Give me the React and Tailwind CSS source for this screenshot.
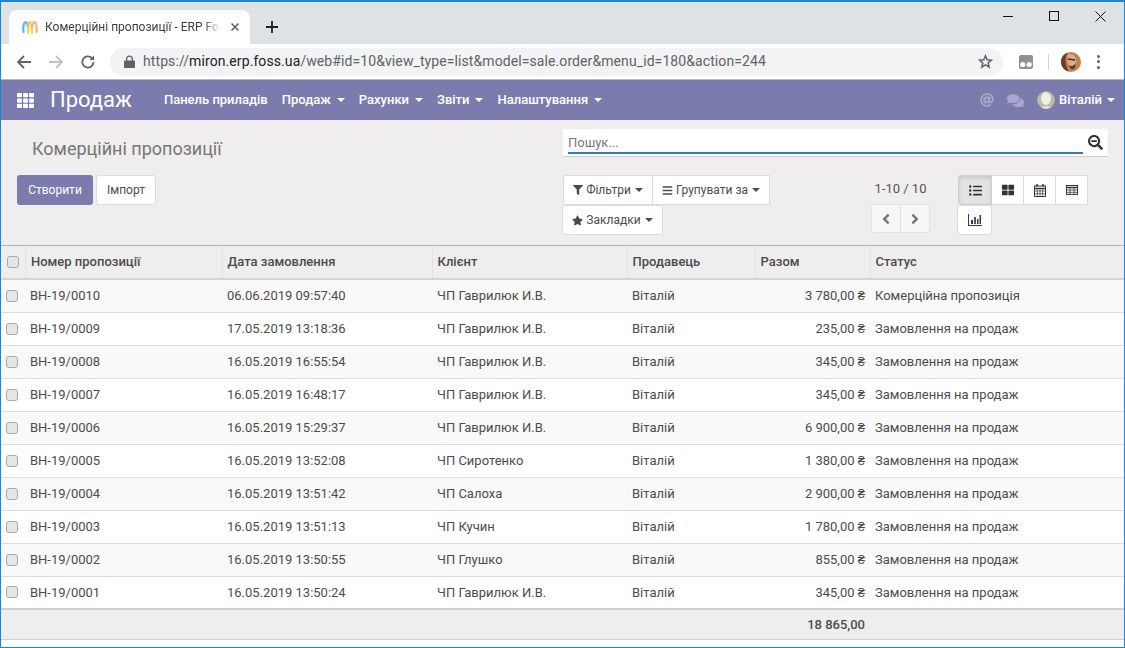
import { FaFilter, FaBars, FaStar, FaListUl, FaThLarge, FaSearchMinus, FaAngleLeft, FaAngleRight, FaAt, FaComments, FaTh } from "react-icons/fa";

const rows = [
  ["ВН-19/0010", "06.06.2019 09:57:40", "ЧП Гаврилюк И.В.", "3 780,00 ₴", "Комерційна пропозиція"],
  ["ВН-19/0009", "17.05.2019 13:18:36", "ЧП Гаврилюк И.В.", "235,00 ₴", "Замовлення на продаж"],
  ["ВН-19/0008", "16.05.2019 16:55:54", "ЧП Гаврилюк И.В.", "345,00 ₴", "Замовлення на продаж"],
  ["ВН-19/0007", "16.05.2019 16:48:17", "ЧП Гаврилюк И.В.", "345,00 ₴", "Замовлення на продаж"],
  ["ВН-19/0006", "16.05.2019 15:29:37", "ЧП Гаврилюк И.В.", "6 900,00 ₴", "Замовлення на продаж"],
  ["ВН-19/0005", "16.05.2019 13:52:08", "ЧП Сиротенко", "1 380,00 ₴", "Замовлення на продаж"],
  ["ВН-19/0004", "16.05.2019 13:51:42", "ЧП Салоха", "2 900,00 ₴", "Замовлення на продаж"],
  ["ВН-19/0003", "16.05.2019 13:51:13", "ЧП Кучин", "1 780,00 ₴", "Замовлення на продаж"],
  ["ВН-19/0002", "16.05.2019 13:50:55", "ЧП Глушко", "855,00 ₴", "Замовлення на продаж"],
  ["ВН-19/0001", "16.05.2019 13:50:24", "ЧП Гаврилюк И.В.", "345,00 ₴", "Замовлення на продаж"],
];

const menu = [
  ["Панель приладів", false],
  ["Продаж", true],
  ["Рахунки", true],
  ["Звіти", true],
  ["Налаштування", true],
];

const Caret = ({ className = "" }) => (
  <span className={`inline-block w-0 h-0 border-x-[4px] border-x-transparent border-t-[4px] border-t-current ${className}`} />
);

const Check = () => (
  <span className="block w-[12px] h-[12px] rounded-[3px] border border-[#a8a8a8] bg-[#e6e6e6]" />
);

function Favicon() {
  return (
    <svg width="18" height="18" viewBox="0 0 18 18" fill="none" strokeWidth="2.2" strokeLinecap="round">
      <path d="M2.500 14 C2 9 2.500 5 4.500 4 C6 4 6.500 6 6.800 9" stroke="#58b7ee" />
      <path d="M7 15 C7 10 7.500 5 9 4 C10.500 5 11 10 11 15" stroke="#f8d04a" />
      <path d="M11.200 9 C11.500 6 12 4 13.500 4 C15.500 5 16 9 15.500 14" stroke="#f0b27a" />
    </svg>
  );
}

function ChromeAvatar() {
  return (
    <svg width="20" height="20" viewBox="0 0 20 20">
      <circle cx="10" cy="10" r="10" fill="#c4814f" />
      <path d="M0 10 A10 10 0 0 1 7 .5 C4.500 4 4 8 5 12 C5.500 15 7 18 8 19.800 A10 10 0 0 1 0 10" fill="#6f3a24" />
      <path d="M7 2.500 C12 1 15.500 5 15 10 C14.500 14 12.500 17 10 17 C7.500 15 5.500 7 7 2.500" fill="#dcae90" />
      <path d="M7 7 L14 8" stroke="#4a2a20" strokeWidth="1.300" />
      <path d="M8 13 C10 15 13 14 14.500 11 L14 15.500 C12 18.500 9 18 8 13" fill="#5a3f33" />
    </svg>
  );
}

function UserAvatar() {
  return (
    <svg width="18" height="18" viewBox="0 0 18 18" className="rounded-full">
      <circle cx="9" cy="9" r="9" fill="#b9bca6" />
      <ellipse cx="9" cy="7.500" rx="5" ry="6.500" fill="#eceee8" />
      <path d="M3 18 C4 14 14 14 15 18 Z" fill="#dfe1d8" />
    </svg>
  );
}

// FontAwesome 4 look: these three are thin grids in the reference, not the filled FA5 glyphs
function CalendarIcon() {
  return (
    <svg width="12" height="13" viewBox="0 0 12 13" fill="none" stroke="#3a3a3a">
      <rect x=".5" y="2" width="11" height="10.500" />
      <path d="M.5 4.500 H11.500" strokeWidth="1.500" />
      <path d="M.5 7 H11.500 M.5 9.700 H11.500 M3.300 4.500 V12.500 M6 4.500 V12.500 M8.700 4.500 V12.500" strokeWidth=".7" />
      <path d="M3 0 V2.500 M9 0 V2.500" strokeWidth="1.600" />
    </svg>
  );
}

function TableIcon() {
  return (
    <svg width="12" height="10" viewBox="0 0 12 10" fill="none" stroke="#3a3a3a">
      <rect x=".5" y=".5" width="11" height="9" />
      <path d="M.5 2.500 H11.500" strokeWidth="1.500" />
      <path d="M.5 5 H11.500 M.5 7.300 H11.500 M4 2.500 V9.500 M8 2.500 V9.500" strokeWidth=".8" />
    </svg>
  );
}

function ChartIcon() {
  return (
    <svg width="14" height="12" viewBox="0 0 14 12" fill="#3a3a3a">
      <path d="M0 0 H1 V11 H14 V12 H0 Z" />
      <rect x="3" y="6" width="2" height="4" />
      <rect x="6" y="3" width="2" height="7" fill="#2f5f8f" />
      <rect x="9" y="5" width="1.500" height="5" />
      <rect x="11.500" y="1" width="1.500" height="9" />
    </svg>
  );
}

function Browser() {
  return (
    <>
      {/* Tab strip */}
      <div className="h-[42px] bg-[#dee1e6] flex items-end pl-[8px] relative">
        <div className="h-[34px] w-[241px] bg-white rounded-t-[8px] flex items-center pl-[12px] pr-[10px] text-[#3c4043] text-[12px]">
          <Favicon />
          <span className="ml-[6px] w-[176px] overflow-hidden whitespace-nowrap [mask-image:linear-gradient(to_right,black_90%,transparent)]">Комерційні пропозиції - ERP Foss</span>
          <svg width="10" height="10" viewBox="0 0 10 10" className="ml-auto" stroke="#5f6368" strokeWidth="1.6"><path d="M1.500 1.500 L8.500 8.500 M8.500 1.500 L1.500 8.500" /></svg>
        </div>
        <svg width="14" height="14" viewBox="0 0 14 14" className="ml-[15px] mb-[10px]" stroke="#202124" strokeWidth="1.8"><path d="M7 1 V13 M1 7 H13" /></svg>
        <div className="flex ml-auto items-start self-start mt-[7px] mr-[18px]">
          <svg width="10" height="10" viewBox="0 0 10 10" className="mt-[2px] mr-[36px]" stroke="#111" strokeWidth="1"><path d="M0 5.500 H10" /></svg>
          <svg width="10" height="10" viewBox="0 0 10 10" className="mt-[2px] mr-[36px]" stroke="#111" strokeWidth="1" fill="none"><rect x=".5" y=".5" width="9" height="9" /></svg>
          <svg width="11" height="11" viewBox="0 0 11 11" className="mt-[2px]" stroke="#111" strokeWidth="1"><path d="M.5 .5 L10.500 10.500 M10.500 .5 L.5 10.500" /></svg>
        </div>
      </div>
      {/* Address bar */}
      <div className="h-[36px] bg-white border-b border-[#b8b8b8] flex items-center pl-[15px] pr-[17px]">
        <svg width="16" height="16" viewBox="0 0 16 16" fill="none" stroke="#5f6368" strokeWidth="1.8"><path d="M15 8 H2 M8 2 L2 8 L8 14" /></svg>
        <svg width="16" height="16" viewBox="0 0 16 16" fill="none" stroke="#bdc1c6" strokeWidth="1.8" className="ml-[16px]"><path d="M1 8 H14 M8 2 L14 8 L8 14" /></svg>
        <svg width="16" height="16" viewBox="0 0 16 16" fill="none" stroke="#5f6368" strokeWidth="1.8" className="ml-[16px]"><path d="M13.500 8 A5.600 5.600 0 1 1 11.800 4" /><path d="M14 1.500 V6 H9.500 Z" fill="#5f6368" stroke="none" /></svg>
        <div className="ml-[14px] w-[893px] h-[28px] rounded-full bg-[#f1f3f4] flex items-center pl-[14px] pr-[10px]">
          <svg width="11" height="13" viewBox="0 0 11 13" fill="#5f6368"><path d="M2 5.500 V4 a3.500 3.500 0 0 1 7 0 V5.500 H10 a1 1 0 0 1 1 1 V12 a1 1 0 0 1 -1 1 H1 a1 1 0 0 1 -1 -1 V6.500 a1 1 0 0 1 1 -1 Z M3.300 5.500 H7.700 V4 a2.200 2.200 0 0 0 -4.400 0 Z" /></svg>
          <span className="ml-[8px] text-[14px] tracking-[0.09px] text-[#5f6368] whitespace-nowrap">
            https://<span className="text-[#202124]">miron.erp.foss.ua</span>/web#id=10&view_type=list&model=sale.order&menu_id=180&action=244
          </span>
          <svg width="15" height="15" viewBox="0 0 24 24" fill="none" stroke="#5f6368" strokeWidth="2.4" className="ml-auto"><path d="M12 3 L14.700 9.300 L21.500 9.900 L16.300 14.400 L17.900 21 L12 17.500 L6.100 21 L7.700 14.400 L2.500 9.900 L9.300 9.300 Z" /></svg>
        </div>
        <svg width="14" height="14" viewBox="0 0 14 14" className="ml-[16px]"><rect width="14" height="14" rx="2" fill="#8d9094" /><circle cx="3.800" cy="9.500" r="2.600" fill="#fff" /><circle cx="10.200" cy="9.500" r="2.600" fill="#fff" /></svg>
        <span className="ml-[15px] w-px h-[16px] bg-[#d0d2d4]" />
        <span className="ml-[12px] flex"><ChromeAvatar /></span>
        <span className="ml-[16px] flex flex-col gap-[2.500px]">
          <i className="block w-[3px] h-[3px] rounded-full bg-[#5f6368]" />
          <i className="block w-[3px] h-[3px] rounded-full bg-[#5f6368]" />
          <i className="block w-[3px] h-[3px] rounded-full bg-[#5f6368]" />
        </span>
      </div>
    </>
  );
}

function Navbar() {
  return (
    <div className="h-[40px] bg-[#7c7bad] flex items-center text-white pl-[16px] pr-[9px]">
      <FaTh size={17} />
      <span className="ml-[16px] text-[22px] leading-none font-normal">Продаж</span>
      <div className="ml-[32px] flex items-center gap-[14px] text-[13px] font-medium">
        {menu.map(([label, caret]) => (
          <span key={label} className="flex items-center whitespace-nowrap">
            {label}
            {caret && <Caret className="ml-[6px]" />}
          </span>
        ))}
      </div>
      <div className="ml-auto flex items-center">
        <FaAt size={14} className="text-[#a9a8cc]" />
        <FaComments size={17} className="ml-[13px] text-[#a9a8cc]" />
        <span className="ml-[13px] flex"><UserAvatar /></span>
        <span className="ml-[4px] text-[13px] font-medium">Віталій</span>
        <Caret className="ml-[5px]" />
      </div>
    </div>
  );
}

const btn = "h-[30px] bg-white border border-[#dcdcdc] text-[#4c4c4c] text-[12px] flex items-center justify-center";

function ControlPanel() {
  return (
    <div className="h-[126px] bg-[#efeded] border-b border-[#b5b5b5] flex">
      <div className="w-[561px] pl-[16px]">
        <div className="pl-[15px] pt-[17px] text-[18px] leading-[24px] text-[#777]">Комерційні пропозиції</div>
        <div className="mt-[14px] flex gap-[3px]">
          <button className="h-[30px] w-[76px] rounded-[3px] bg-[#7c7bad] text-white text-[12px]">Створити</button>
          <button className={`${btn} w-[60px] rounded-[3px]`}>Імпорт</button>
        </div>
      </div>
      <div className="flex-1">
        <div className="mt-[9px] w-[545px] h-[28px] ml-[1px] bg-white border-b border-[#cfcfcf] flex pl-[5px] pr-[5px]">
          <div className="flex-1 border-b-2 border-[#337ab7] h-[25px] text-[13px] leading-[27px] text-[#777]">Пошук...</div>
          <FaSearchMinus size={15} className="ml-[5px] mt-[6px] text-[#333]" />
        </div>
        <div className="flex mt-[18px]">
          <div className="w-[295px]">
            <div className="flex pl-[1px]">
              <button className={`${btn} w-[90px] rounded-l-[3px]`}><FaFilter size={10} className="mr-[3px]" />Фільтри<Caret className="ml-[4px]" /></button>
              <button className={`${btn} w-[117px] border-l-0`}><FaBars size={11} className="mr-[3px]" />Групувати за<Caret className="ml-[4px]" /></button>
            </div>
            <button className={`${btn} w-[101px] rounded-[3px]`}><FaStar size={11} className="mr-[3px]" />Закладки<Caret className="ml-[4px]" /></button>
          </div>
          <div className="w-[87px] flex flex-col items-center">
            <div className="h-[29px] text-[13px] leading-[28px] text-[#555] w-[60px] text-center whitespace-nowrap">1-10 / 10</div>
            <div className="flex">
              <span className="w-[30px] h-[29px] bg-[#f7f7f7] border border-[#e3e3e3] rounded-l-[3px] flex items-center justify-center text-[#777]"><FaAngleLeft size={16} /></span>
              <span className="w-[29px] h-[29px] bg-[#f7f7f7] border border-l-0 border-[#e3e3e3] rounded-r-[3px] flex items-center justify-center text-[#777]"><FaAngleRight size={16} /></span>
            </div>
          </div>
          <div className="ml-[14px] w-[135px]">
            <div className="flex">
              <span className={`${btn} w-[34px] !bg-[#e3e3e3] !border-[#cfcfcf] rounded-l-[3px] shadow-[inset_0_2px_4px_rgba(0,0,0,0.12)]`}><FaListUl size={13} className="text-[#333]" /></span>
              <span className={`${btn} w-[32px] border-l-0`}><FaThLarge size={12} className="text-[#333]" /></span>
              <span className={`${btn} w-[32px] border-l-0`}><CalendarIcon /></span>
              <span className={`${btn} w-[32px] border-l-0`}><TableIcon /></span>
            </div>
            <span className={`${btn} w-[35px] rounded-b-[3px] -ml-px`}><ChartIcon /></span>
          </div>
        </div>
      </div>
    </div>
  );
}

const cols = ["w-[24px]", "w-[197px]", "w-[210px]", "w-[195px]", "w-[128px]", "w-[115px]", ""];

function List() {
  return (
    <table className="w-full table-fixed border-collapse text-[13px] text-[#4c4c4c]">
      <colgroup>
        {cols.map((c, i) => <col key={i} className={c} />)}
      </colgroup>
      <thead>
        <tr className="h-[33px] bg-[#eeeeee] border-b-2 border-[#d5d5d5] text-left font-medium">
          <th className="border-r border-[#e2e2e2] pl-[6px]"><Check /></th>
          <th className="border-r border-[#e2e2e2] pl-[5.5px] font-medium">Номер пропозиції</th>
          <th className="border-r border-[#e2e2e2] pl-[5px] font-medium">Дата замовлення</th>
          <th className="border-r border-[#e2e2e2] pl-[5px] font-medium">Клієнт</th>
          <th className="border-r border-[#e2e2e2] pl-[5px] font-medium">Продавець</th>
          <th className="border-r border-[#e2e2e2] pl-[5px] font-medium">Разом</th>
          <th className="pl-[5px] font-medium">Статус</th>
        </tr>
      </thead>
      <tbody>
        {rows.map((r, i) => (
          <tr key={r[0]} className={`h-[33px] border-b border-[#dddddd] ${i % 2 === 0 ? "bg-[#f9f9f9]" : "bg-white"}`}>
            <td className="pl-[5px]"><Check /></td>
            <td className="pl-[5px]">{r[0]}</td>
            <td className="pl-[5px]">{r[1]}</td>
            <td className="pl-[5px]">{r[2]}</td>
            <td className="pl-[5px]">Віталій</td>
            <td className="pr-[5px] text-right">{r[3]}</td>
            <td className="pl-[5px]">{r[4]}</td>
          </tr>
        ))}
      </tbody>
      <tfoot>
        <tr className="h-[30px] bg-[#eeeeee] border-t-2 border-b border-t-[#cfcfcf] border-b-[#cfcfcf] font-medium">
          <td colSpan={5} />
          <td className="pr-[5px] text-right">18 865,00</td>
          <td />
        </tr>
      </tfoot>
    </table>
  );
}

export default function App() {
  return (
    <div className="w-[1125px] h-[648px] overflow-hidden border border-[#1a87d6] border-t-2 bg-white font-['Roboto',sans-serif]">
      <Browser />
      <Navbar />
      <ControlPanel />
      <List />
    </div>
  );
}
